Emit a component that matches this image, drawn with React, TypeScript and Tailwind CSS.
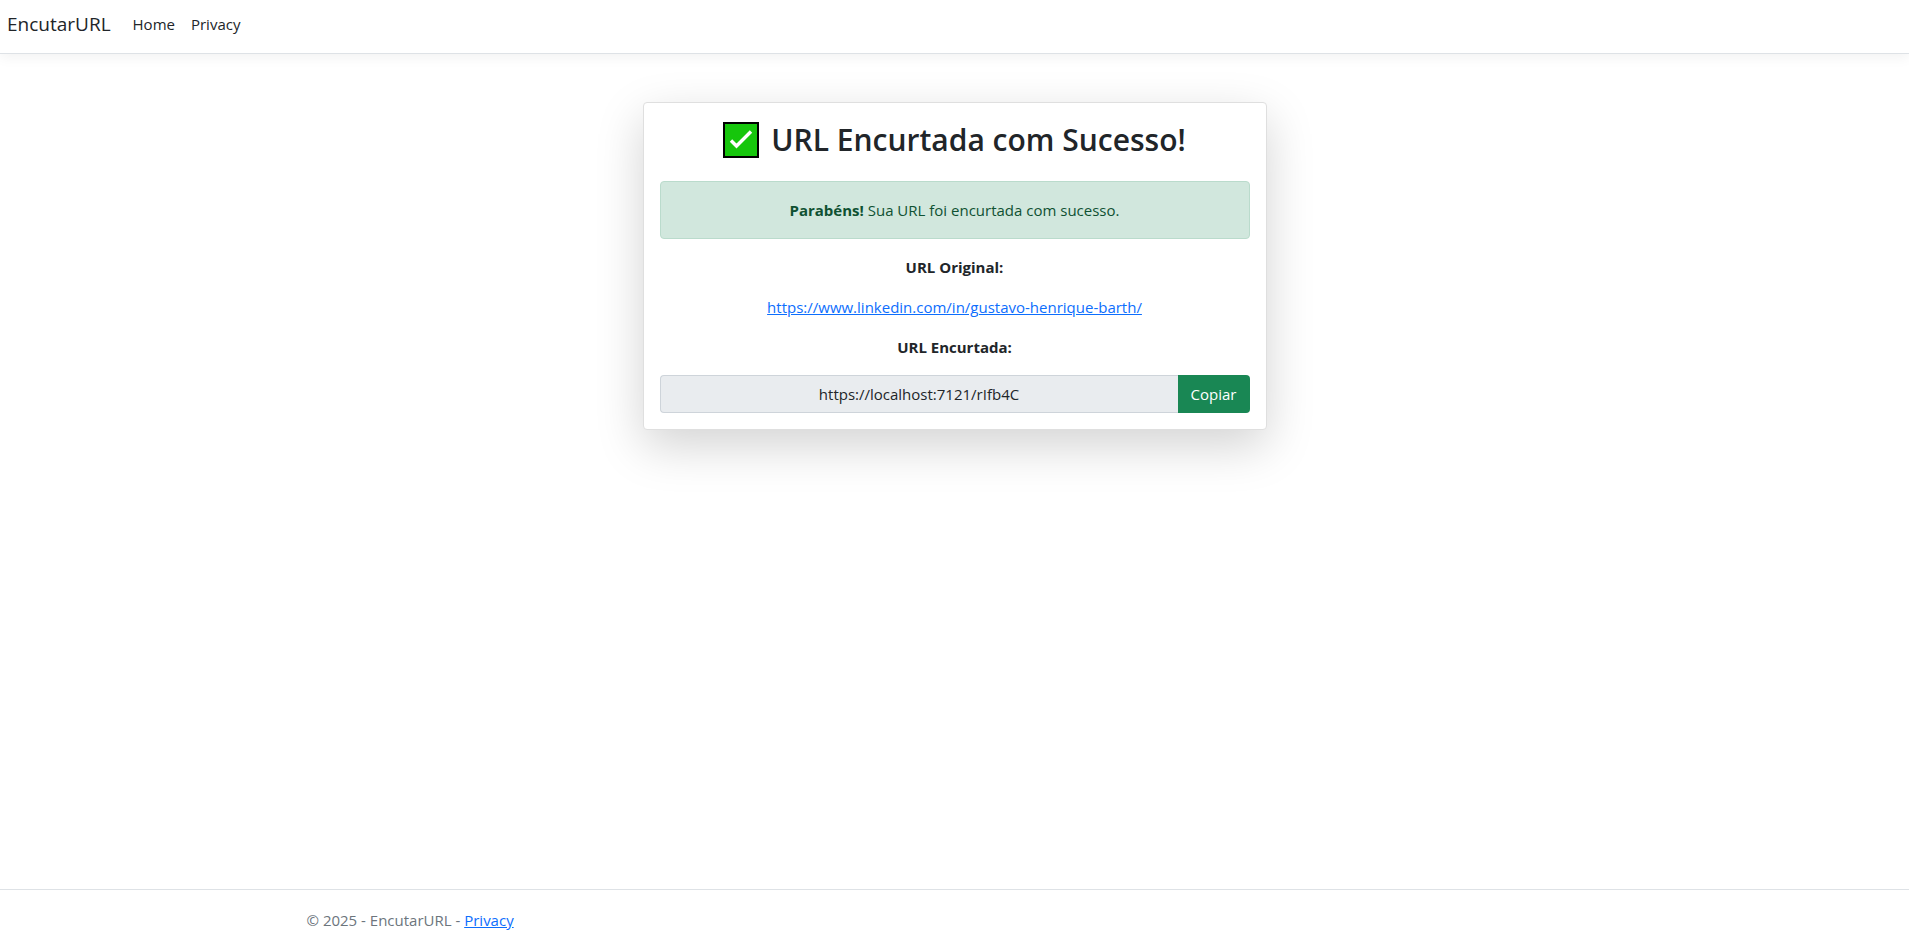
import { useRef } from "react";

function CheckMark() {
  return (
    <svg viewBox="0 0 36 36" className="h-9 w-9 shrink-0" role="img" aria-label="Sucesso">
      <rect width="36" height="36" fill="#000" />
      <rect x="2" y="2" width="32" height="32" fill="#16c60c" />
      <path d="M8 18.5 13.5 24 28 9.5" fill="none" stroke="#fff" strokeWidth="3.4" />
    </svg>
  );
}

function Header() {
  return (
    <header className="border-b border-[#dee2e6] bg-white shadow-[0_4px_12px_rgba(0,0,0,0.05)]">
      <nav className="flex items-center px-[7px] pt-3 pb-[17px] text-[15px] leading-6">
        <a href="#" className="mr-[22px] text-[19px]">
          EncutarURL
        </a>
        <ul className="flex gap-4">
          <li>
            <a href="#">Home</a>
          </li>
          <li>
            <a href="#">Privacy</a>
          </li>
        </ul>
      </nav>
    </header>
  );
}

function ResultCard() {
  const urlRef = useRef<HTMLInputElement>(null);

  const copyUrl = () => {
    if (!urlRef.current) return;
    urlRef.current.select();
    navigator.clipboard?.writeText(urlRef.current.value);
  };

  return (
    <section className="w-full max-w-[624px] rounded border border-[#dfdfdf] bg-white p-4 text-center shadow-[0_16px_48px_rgba(0,0,0,0.175)]">
      <h2 className="mb-[22px] flex items-center justify-center gap-3 pt-0.5 text-[30px] leading-[38px] font-semibold">
        <CheckMark />
        URL Encurtada com Sucesso!
      </h2>
      <div role="alert" className="mb-4 rounded border border-[#badbcc] bg-[#d1e7dd] p-4 text-[#0f5132]">
        <strong>Parabéns!</strong> Sua URL foi encurtada com sucesso.
      </div>
      <p className="mb-4 font-bold">URL Original:</p>
      <p className="mb-4">
        <a href="#" className="text-[#0d6efd] underline">
          https://www.linkedin.com/in/gustavo-henrique-barth/
        </a>
      </p>
      <p className="mb-4">
        <label htmlFor="short-url" className="font-bold">
          URL Encurtada:
        </label>
      </p>
      <div className="flex">
        <input
          ref={urlRef}
          id="short-url"
          type="text"
          readOnly
          value="https://localhost:7121/rIfb4C"
          className="h-[38px] min-w-0 flex-1 rounded-l border border-r-0 border-[#ced4da] bg-[#e9ecef] px-3 text-center outline-none"
        />
        <button
          type="button"
          onClick={copyUrl}
          className="h-[38px] w-[72px] rounded-r bg-[#198754] text-white"
        >
          Copiar
        </button>
      </div>
    </section>
  );
}

export default function App() {
  return (
    <div className="flex min-h-screen flex-col bg-white font-['Open_Sans','Noto_Sans',sans-serif] text-[15px] leading-6 text-[#212529]">
      <Header />
      <main className="flex flex-1 items-start justify-center px-3 pt-12 pb-4">
        <ResultCard />
      </main>
      <footer className="border-t border-[#dee2e6] text-[#6c757d]">
        <div className="mx-auto max-w-[1320px] px-3 pt-[18px] pb-4">
          © 2025 - EncutarURL -{" "}
          <a href="#" className="text-[#0d6efd] underline">
            Privacy
          </a>
        </div>
      </footer>
    </div>
  );
}
